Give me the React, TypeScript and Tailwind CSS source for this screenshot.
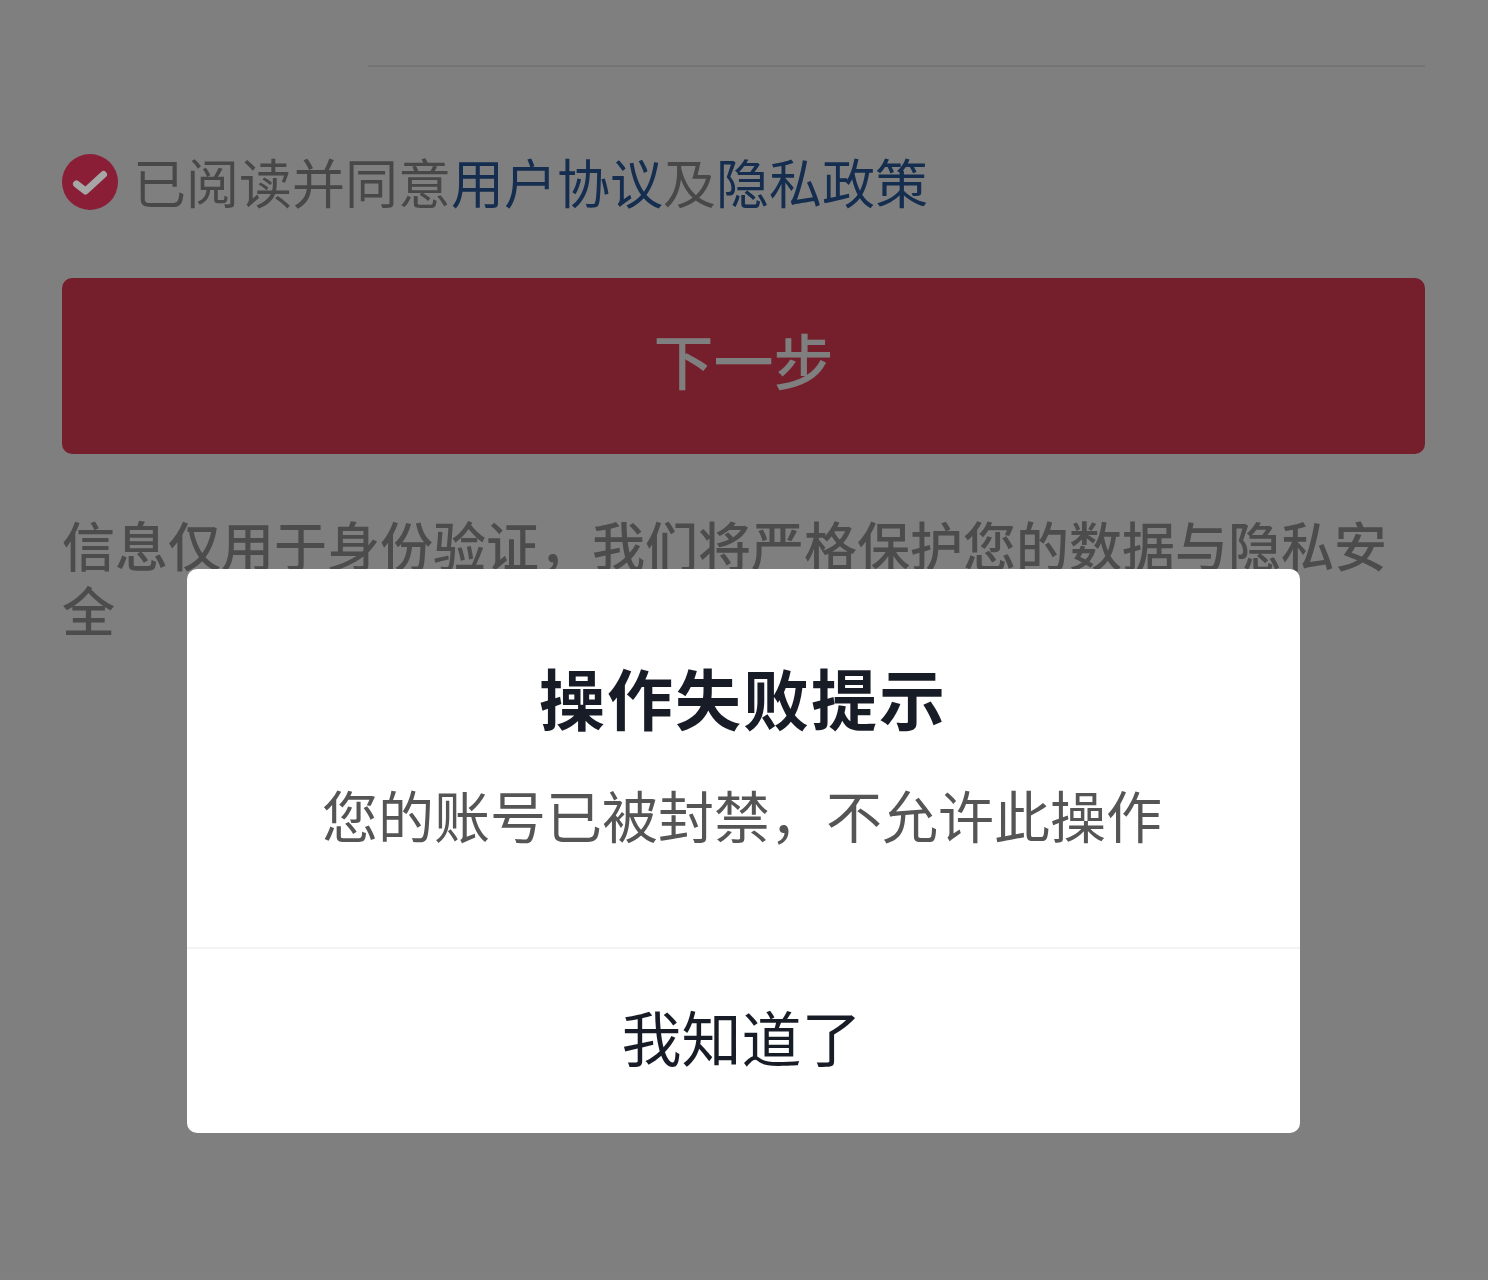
export default function App() {
  const font = { fontFamily: '"Noto Sans CJK SC", "Noto Sans", sans-serif' };
  return (
    <div style={font} className="relative h-[1280px] w-[1488px] overflow-hidden bg-white">
      <div className="flex flex-col pl-[62px] pr-[63px] pt-[65px]">
        <div className="ml-[306px] h-[2px] bg-[#e8e8e8]" />
        <div className="mt-[77px] flex h-[76px] items-center">
          <svg width="56" height="56" viewBox="0 0 56 56" className="relative z-10 shrink-0">
            <circle cx="28" cy="28" r="28" fill="#8a1e36" />
            <path d="M14.5 30 L23.5 37 L41.5 20.5" fill="none" stroke="#a6a6a6" strokeWidth="7" strokeLinecap="round" strokeLinejoin="round" />
          </svg>
          <p className="ml-[15px] pb-[2px] text-[53px] leading-[76px] text-[#909090]">
            已阅读并同意<span className="text-[#2a5a9e]">用户协议</span>及<span className="text-[#2a5a9e]">隐私政策</span>
          </p>
        </div>
        <button className="mt-[58px] flex h-[176px] items-center justify-center rounded-[10px] bg-[#ec3e58] pb-[14px] text-[60px] font-medium text-white">
          下一步
        </button>
        <p className="mt-[58px] text-[53px] font-medium leading-[65px] text-[#999999]">
          信息仅用于身份验证，我们将严格保护您的数据与隐私安全
        </p>
      </div>

      <div className="absolute inset-0 flex items-start justify-center bg-black/50 pr-[2px] pt-[569px]">
        <div className="flex h-[564px] w-[1113px] flex-col rounded-[10px] bg-white">
          <div className="flex h-[378px] flex-col items-center">
            <h2 className="mt-[84px] text-[66px] font-bold leading-[86px] tracking-[2px] text-[#181c26]">操作失败提示</h2>
            <p className="mt-[40px] pr-[2px] text-[56px] leading-[70px] text-[#555555]">您的账号已被封禁，不允许此操作</p>
          </div>
          <div className="h-[2px] bg-[#f3f3f3]" />
          <button className="flex flex-1 items-center justify-center pb-[10px] pr-[3px] text-[60px] text-[#181c26]">我知道了</button>
        </div>
      </div>
    </div>
  );
}
